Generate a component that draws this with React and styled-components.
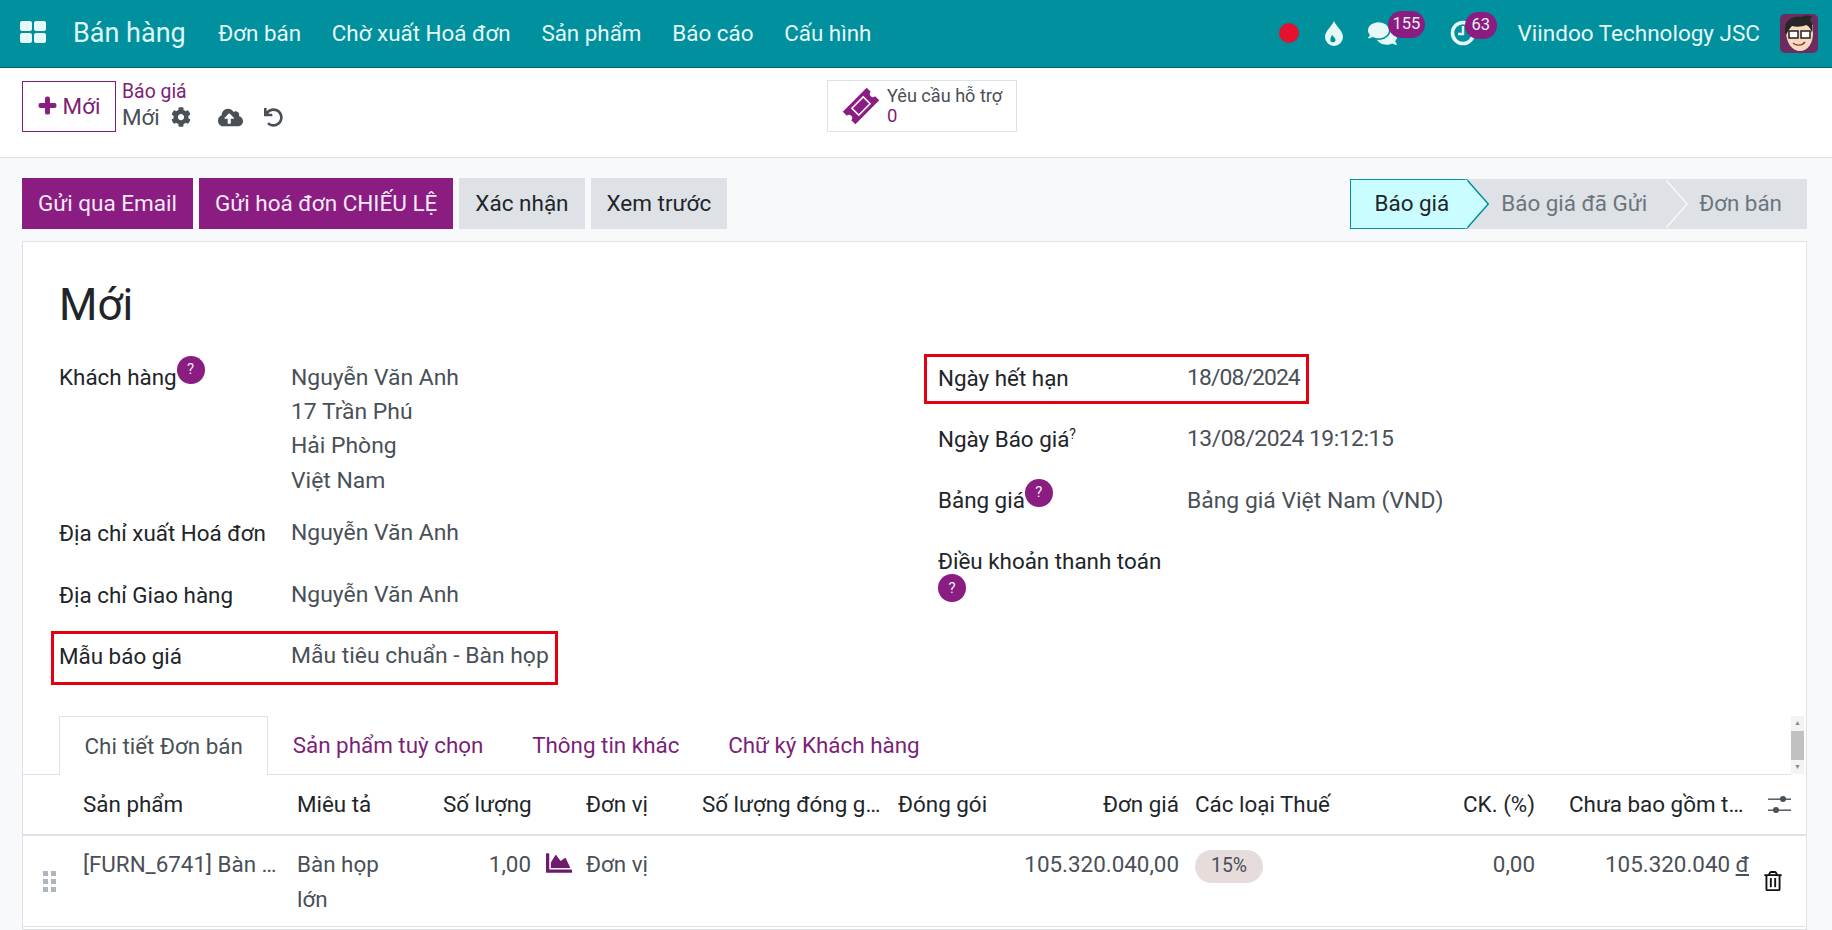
import React from "react";
import styled, { createGlobalStyle } from "styled-components";
import { FaPlus, FaCog, FaCloudUploadAlt, FaUndo, FaComments, FaChartArea, FaRegTrashAlt } from "react-icons/fa";

const Global = createGlobalStyle`
  html, body { margin: 0; padding: 0; height: 100%; overflow: hidden; background: #f8f9fa; }
  body { font-family: Roboto, "Noto Sans", sans-serif; font-size: 22.4px; color: #212529; }
  * { box-sizing: border-box; }
`;

const Page = styled.div`height: 930px; display: flex; flex-direction: column; overflow: hidden;`;

const Navbar = styled.header`
  height: 68px; flex: none; display: flex; align-items: center; background: #00909e;
  border-bottom: 1px solid #00616b; color: #e6f8f8; padding: 0 14px 1px 20px;
`;
const AppName = styled.span`font-size: 27px; margin: 0 17px 0 27px; color: #dff7f7;`;
const NavItem = styled.span`font-size: 22.4px; padding: 0 15.4px; color: #e6f8f8;`;
const NavRight = styled.div`margin-left: auto; display: flex; align-items: center;`;
const RedDot = styled.span`width: 20px; height: 20px; border-radius: 50%; background: #e4122f; margin-right: 26px;`;
const Systray = styled.span`position: relative; display: inline-flex; width: ${p => p.$w}px; margin-right: ${p => p.$mr}px;`;
const Count = styled.span`
  position: absolute; top: -8px; left: ${p => p.$left}px; height: 27px; padding: 0 ${p => p.$pad}px; border-radius: 14px;
  background: #8a1c82; color: #eee; font-size: 16.5px; line-height: 25px;
`;
const Company = styled.span`font-size: 22.5px; margin-right: 20px; color: #e6f8f8;`;

const ControlPanel = styled.section`
  height: 90px; flex: none; background: #fff; border-bottom: 1px solid #dee2e6;
  display: grid; grid-template-columns: 805px auto; padding: 13px 0 0 22px; align-items: start;
`;
const LeftTools = styled.div`display: flex;`;
const NewButton = styled.button`
  width: 94px; height: 51px; background: #fff; border: 1px solid #7c1f78; color: #7c1f78; font: 400 22.4px Roboto, sans-serif;
  display: flex; align-items: center; justify-content: center; gap: 6px; padding: 0 0 2px; border-radius: 0;
  svg { font-size: 19px; color: #8a1c82; stroke: currentColor; stroke-width: 36px; overflow: visible; }
`;
const Crumbs = styled.div`margin-left: 6px; display: flex; flex-direction: column;`;
const CrumbLink = styled.a`font-size: 19.4px; line-height: 22px; color: #7c1f78;`;
const CrumbRow = styled.div`display: flex; align-items: center; font-size: 22.4px; line-height: 28px; color: #495057;`;
const ToolIcon = styled.span`display: inline-flex; color: #495057; font-size: ${p => p.$size}px; margin-left: ${p => p.$ml}px;`;
const SupportButton = styled.div`
  width: 190px; height: 52px; border: 1px solid #dee2e6; background: #fff; display: flex; align-items: center; padding-left: 17px; margin-top: -1px;
`;
const TicketIcon = styled.span`display: inline-flex; margin-right: 10px;`;
const SupportText = styled.div`display: flex; flex-direction: column; font-size: 18.1px; line-height: 20px; color: #495057;`;
const SupportCount = styled.span`color: #7c1f78; font-size: 18.5px;`;

const Content = styled.main`flex: 1; padding: 20px 25px 0 22px; display: flex; flex-direction: column; min-height: 0;`;
const ActionBar = styled.div`display: flex; justify-content: space-between; height: 51px; margin-bottom: 12px;`;
const Buttons = styled.div`display: flex; gap: 6px;`;
const ActionButton = styled.button`
  border: 0; border-radius: 0; height: 51px; padding: 0 ${p => p.$pad}px 2px; font: 400 22.5px Roboto, sans-serif;
  background: ${p => (p.$primary ? "#8a1c82" : "#dee2e6")}; color: ${p => (p.$primary ? "#f4eaf4" : "#212529")};
`;
const Status = styled.div`display: flex; height: 50px; margin-top: 1px; background: #dee2e6;`;
const Stage = styled.div`
  position: relative; display: flex; align-items: center; font-size: 22.4px; padding: 0 ${p => p.$pr}px 2px ${p => p.$pl}px;
  color: ${p => (p.$active ? "#212529" : "#6c757d")}; background: ${p => (p.$active ? "#c9fdff" : "transparent")};
  border: ${p => (p.$active ? "1px solid #00909e" : "0")}; border-right: 0; z-index: ${p => (p.$active ? 2 : 1)};
  &::before, &::after {
    content: ${p => (p.$last ? "none" : '""')}; position: absolute; left: 100%; width: 22px; clip-path: polygon(0 0, 100% 50%, 0 100%);
  }
  &::before { top: ${p => (p.$active ? "-1px" : "0")}; bottom: ${p => (p.$active ? "-1px" : "0")}; background: ${p => (p.$active ? "#00909e" : "#f8f9fa")}; }
  &::after { top: ${p => (p.$active ? "-1px" : "0")}; bottom: ${p => (p.$active ? "-1px" : "0")}; margin-left: -2px; background: ${p => (p.$active ? "#c9fdff" : "#dee2e6")}; }
`;

const Card = styled.section`flex: 1; background: #fff; border: 1px solid #dee2e6; min-height: 0; display: flex; flex-direction: column;`;
const Sheet = styled.div`padding: 37px 36px 0;`;
const Title = styled.h1`margin: 0 0 30px; font-size: 44px; line-height: 52px; font-weight: 400; color: #212529;`;
const Columns = styled.div`display: grid; grid-template-columns: 879px 1fr;`;
const Column = styled.div`display: flex; flex-direction: column; align-items: flex-start;`;
const Field = styled.div`
  display: grid; grid-template-columns: ${p => p.$label}px auto; margin-bottom: ${p => p.$mb || 0}px; line-height: 34.2px; font-size: 22.4px;
`;
const Label = styled.div`color: #212529; line-height: ${p => p.$lh || "34.2px"}; padding: ${p => p.$pt ?? 0}px 20px 0 0; margin-top: ${p => p.$mt ?? -1}px;`;
const Value = styled.div`color: #495057; white-space: nowrap; font-size: 22.9px; letter-spacing: ${p => p.$ls || 0}px;`;
const Help = styled.span`
  display: inline-flex; align-items: center; justify-content: center; width: 28px; height: 28px; border-radius: 50%;
  background: #8a1c82; color: #eee; font-size: 15px; line-height: 1; margin: -14px 0; position: relative; top: ${p => p.$top ?? -11}px;
`;
const SmallHelp = styled.sup`font-size: 14px; line-height: 0;`;
const Highlight = styled.div`
  border: 3px solid #e5000f; width: fit-content;
  margin: ${p => p.$margin}; padding: ${p => p.$padding};
`;

const TabBar = styled.div`display: flex; height: 59px; margin-top: 31px; flex: none;`;
const Tabs = styled.div`flex: 1; display: flex; padding-left: 36px; border-bottom: 1px solid #dee2e6; height: 59px;`;
const Tab = styled.div`
  height: ${p => (p.$active ? "59px" : "58px")}; display: flex; align-items: center; padding: 0 ${p => (p.$active ? "24.5px" : "24.4px")}; font-size: 22.4px;
  color: ${p => (p.$active ? "#495057" : "#7c1f78")}; background: #fff;
  border: ${p => (p.$active ? "1px solid #dee2e6" : "0")}; border-bottom: 0;
`;
const Scrollbar = styled.div`width: 13px; margin: 0 2px 0 0; height: 58px; background: #f3f3f3; display: flex; flex-direction: column; align-items: center;`;
const ScrollArrow = styled.span`height: 15px; display: flex; align-items: center; color: #8a8a8a; font-size: 7px; line-height: 1;`;
const ScrollThumb = styled.span`width: 100%; height: 29px; background: #c1c1c1;`;

const Row = styled.div`
  display: grid; grid-template-columns: 48px 214px 146px 143px 116px 196px 120px 177px 217px 147px 213px 1fr;
  height: ${p => p.$h}px; border-bottom: ${p => p.$bb}px solid #dee2e6; font-size: 22.4px; flex: none; line-height: 34.2px;
`;
const HeadCell = styled.div`
  align-self: center; color: #212529; padding: 0 ${p => p.$pr ?? 12}px 2px ${p => p.$pl ?? 12}px; text-align: ${p => (p.$right ? "right" : "left")};
  white-space: nowrap; overflow: hidden;
`;
const Cell = styled.div`
  padding: 11px ${p => p.$pr ?? 12}px 0 ${p => p.$pl ?? 12}px; color: #495057; text-align: ${p => (p.$right ? "right" : "left")};
  white-space: ${p => (p.$wrap ? "normal" : "nowrap")}; overflow: hidden;
`;
const QtyCell = styled.div`display: flex; justify-content: flex-end; align-items: flex-start; gap: 15px; padding: 11px 2px 0 0; color: #495057;`;
const ChartIcon = styled.span`display: inline-flex; font-size: 26px; color: #6f1a6d; margin-top: 3px;`;
const Handle = styled.div`
  align-self: center; justify-self: start; margin-left: 20px; display: grid; grid-template-columns: 5px 5px; gap: 3px;
  span { height: 5px; background: #adb5bd; }
`;
const Pill = styled.span`
  display: inline-flex; align-items: center; height: 33px; margin-top: 1px; padding: 0 16px; border-radius: 17px; background: #e6dcdc; color: #495057; font-size: 19.4px;
`;
const IconCell = styled.div`align-self: center; display: inline-flex; padding-left: ${p => p.$pl}px; color: ${p => p.$color}; font-size: 20px;`;

function Apps() {
  return (
    <svg width="26" height="22" viewBox="0 0 26 22" fill="#e6f8f8" style={{ marginTop: -3 }}>
      <rect x="0" y="0" width="12" height="10" rx="2" /><rect x="14" y="0" width="12" height="10" rx="2" />
      <rect x="0" y="12" width="12" height="10" rx="2" /><rect x="14" y="12" width="12" height="10" rx="2" />
    </svg>
  );
}
function Drop() {
  return (
    <svg width="18" height="25" viewBox="0 0 18 25">
      <path d="M9 0C11 5 18 10 18 16a9 9 0 0 1-18 0C0 10 7 5 9 0Z" fill="#e6f8f8" />
      <path d="M7 13.5c1 2 3.5 3.5 3.5 5.2a2.6 2.6 0 0 1-5.2 0c0-1.7 1.2-3.2 1.7-5.2Z" fill="#00909e" />
    </svg>
  );
}
function Clock() {
  return (
    <svg width="26" height="26" viewBox="0 0 26 26" fill="none" stroke="#e6f8f8">
      <circle cx="13" cy="13" r="10.5" strokeWidth="3.6" />
      <path d="M13 6v8h-5" strokeWidth="2.4" />
    </svg>
  );
}
function Avatar() {
  return (
    <svg width="38" height="39" viewBox="0 0 38 39">
      <rect width="38" height="39" rx="5" fill="#6d2c5f" />
      <path d="M6 17c0 12 6 20 14 20s13-8 13-18V11H8Z" fill="#f7d9c0" />
      <path d="M6 21C2 8 11 1 22 3c3-2 8-2 10 0-1 1-2 2-2 3 3 3 3 10 2 13-1-4-3-7-6-8-4 2-10 2-14 1-2 2-4 5-6 9Z" fill="#262626" />
      <rect x="9" y="17" width="9" height="7" fill="#fff" stroke="#222" strokeWidth="1.5" />
      <rect x="21" y="17" width="9" height="7" fill="#fff" stroke="#222" strokeWidth="1.5" />
      <path d="M13 29c3 3 9 3 12-1" fill="none" stroke="#8a3b2e" strokeWidth="1.3" />
    </svg>
  );
}
function Sliders() {
  return (
    <svg width="23" height="18" viewBox="0 0 23 18" fill="#495057">
      <rect x="0" y="2.5" width="23" height="1.4" /><circle cx="15" cy="3" r="3" />
      <rect x="0" y="13.5" width="23" height="1.4" /><circle cx="8" cy="14" r="3" />
    </svg>
  );
}
function Ticket() {
  return (
    <svg width="32" height="34" viewBox="-2 -2 36 36" style={{ overflow: "visible" }}>
      <g transform="rotate(-45 16 16)">
        <path d="M-3 6h38v6.5a3.5 3.5 0 0 0 0 7V26H-3v-6.5a3.5 3.5 0 0 0 0-7Z" fill="#8a1c82" />
        <rect x="7" y="10.5" width="18" height="11" fill="none" stroke="#fff" strokeWidth="1.7" />
      </g>
    </svg>
  );
}

export default function App() {
  return (
    <Page>
      <Global />
      <Navbar>
        <Apps />
        <AppName>Bán hàng</AppName>
        <NavItem>Đơn bán</NavItem>
        <NavItem>Chờ xuất Hoá đơn</NavItem>
        <NavItem>Sản phẩm</NavItem>
        <NavItem>Báo cáo</NavItem>
        <NavItem>Cấu hình</NavItem>
        <NavRight>
          <RedDot />
          <Systray $w={18} $mr={25}><Drop /></Systray>
          <Systray $w={30} $mr={52}>
            <FaComments size={29} color="#e6f8f8" />
            <Count $left={20} $pad={5}>155</Count>
          </Systray>
          <Systray $w={26} $mr={42}>
            <Clock />
            <Count $left={15} $pad={7}>63</Count>
          </Systray>
          <Company>Viindoo Technology JSC</Company>
          <Avatar />
        </NavRight>
      </Navbar>

      <ControlPanel>
        <LeftTools>
          <NewButton><FaPlus />Mới</NewButton>
          <Crumbs>
            <CrumbLink>Báo giá</CrumbLink>
            <CrumbRow>
              Mới
              <ToolIcon $size={20} $ml={11}><FaCog /></ToolIcon>
              <ToolIcon $size={25} $ml={27}><FaCloudUploadAlt /></ToolIcon>
              <ToolIcon $size={19} $ml={21}><FaUndo /></ToolIcon>
            </CrumbRow>
          </Crumbs>
        </LeftTools>
        <SupportButton>
          <TicketIcon><Ticket /></TicketIcon>
          <SupportText>
            Yêu cầu hỗ trợ
            <SupportCount>0</SupportCount>
          </SupportText>
        </SupportButton>
      </ControlPanel>

      <Content>
        <ActionBar>
          <Buttons>
            <ActionButton $primary $pad={16}>Gửi qua Email</ActionButton>
            <ActionButton $primary $pad={16}>Gửi hoá đơn CHIẾU LỆ</ActionButton>
            <ActionButton $pad={16}>Xác nhận</ActionButton>
            <ActionButton $pad={16}>Xem trước</ActionButton>
          </Buttons>
          <Status>
            <Stage $active $pl={24} $pr={18}>Báo giá</Stage>
            <Stage $pl={34} $pr={19}>Báo giá đã Gửi</Stage>
            <Stage $last $pl={33} $pr={25}>Đơn bán</Stage>
          </Status>
        </ActionBar>

        <Card>
          <Sheet>
            <Title>Mới</Title>
            <Columns>
              <Column>
                <Field $label={232} $mb={18}>
                  <Label>Khách hàng<Help>?</Help></Label>
                  <Value>Nguyễn Văn Anh<br />17 Trần Phú<br />Hải Phòng<br />Việt Nam</Value>
                </Field>
                <Field $label={232} $mb={28}>
                  <Label $mt={0}>Địa chỉ xuất Hoá đơn</Label>
                  <Value>Nguyễn Văn Anh</Value>
                </Field>
                <Field $label={232} $mb={19}>
                  <Label $mt={0}>Địa chỉ Giao hàng</Label>
                  <Value>Nguyễn Văn Anh</Value>
                </Field>
                <Highlight $margin="0 0 0 -8px" $padding="5px 6px 9px 5px">
                  <Field $label={232}>
                    <Label $mt={0}>Mẫu báo giá</Label>
                    <Value>Mẫu tiêu chuẩn - Bàn họp</Value>
                  </Field>
                </Highlight>
              </Column>
              <Column>
                <Highlight $margin="-7px 0 18px -14px" $padding="4px 6px 6px 11px">
                  <Field $label={249}>
                    <Label $mt={0}>Ngày hết hạn</Label>
                    <Value $ls={-0.9}>18/08/2024</Value>
                  </Field>
                </Highlight>
                <Field $label={249} $mb={28}>
                  <Label $mt={0}>Ngày Báo giá<SmallHelp>?</SmallHelp></Label>
                  <Value $ls={-0.5}>13/08/2024 19:12:15</Value>
                </Field>
                <Field $label={249} $mb={28}>
                  <Label>Bảng giá<Help>?</Help></Label>
                  <Value>Bảng giá Việt Nam (VND)</Value>
                </Field>
                <Field $label={249}>
                  <Label $mt={0} $lh="25px" $pt={2}>Điều khoản thanh toán <Help $top={-1}>?</Help></Label>
                  <Value />
                </Field>
              </Column>
            </Columns>
          </Sheet>

          <TabBar>
            <Tabs>
              <Tab $active>Chi tiết Đơn bán</Tab>
              <Tab>Sản phẩm tuỳ chọn</Tab>
              <Tab>Thông tin khác</Tab>
              <Tab>Chữ ký Khách hàng</Tab>
            </Tabs>
            <Scrollbar>
              <ScrollArrow>▲</ScrollArrow>
              <ScrollThumb />
              <ScrollArrow>▼</ScrollArrow>
            </Scrollbar>
          </TabBar>

          <Row $h={61} $bb={2}>
            <div />
            <HeadCell>Sản phẩm</HeadCell>
            <HeadCell>Miêu tả</HeadCell>
            <HeadCell $right $pr={43}>Số lượng</HeadCell>
            <HeadCell>Đơn vị</HeadCell>
            <HeadCell $pr={0}>Số lượng đóng g…</HeadCell>
            <HeadCell>Đóng gói</HeadCell>
            <HeadCell $right $pr={4}>Đơn giá</HeadCell>
            <HeadCell>Các loại Thuế</HeadCell>
            <HeadCell $right>CK. (%)</HeadCell>
            <HeadCell $pl={22} $pr={0}>Chưa bao gồm t…</HeadCell>
            <IconCell $pl={8}><Sliders /></IconCell>
          </Row>
          <Row $h={91} $bb={1}>
            <Handle><span /><span /><span /><span /><span /><span /></Handle>
            <Cell $pr={0}>[FURN_6741] Bàn …</Cell>
            <Cell $wrap $pr={30}>Bàn họp lớn</Cell>
            <QtyCell>1,00<ChartIcon><FaChartArea /></ChartIcon></QtyCell>
            <Cell>Đơn vị</Cell>
            <div />
            <div />
            <Cell $right $pr={4}>105.320.040,00</Cell>
            <Cell><Pill>15%</Pill></Cell>
            <Cell $right>0,00</Cell>
            <Cell $right $pr={11}>105.320.040 <u>đ</u></Cell>
            <IconCell $pl={3} $color="#111"><FaRegTrashAlt /></IconCell>
          </Row>
        </Card>
      </Content>
    </Page>
  );
}
